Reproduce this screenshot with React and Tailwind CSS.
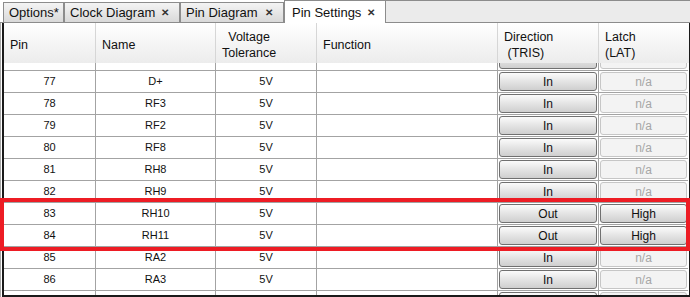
import React from "react";

const rows = [
    { pin: 76, name: "D-", dir: "In", lat: "n/a", hidden: true },
    { pin: 77, name: "D+", dir: "In", lat: "n/a" },
    { pin: 78, name: "RF3", dir: "In", lat: "n/a" },
    { pin: 79, name: "RF2", dir: "In", lat: "n/a" },
    { pin: 80, name: "RF8", dir: "In", lat: "n/a" },
    { pin: 81, name: "RH8", dir: "In", lat: "n/a" },
    { pin: 82, name: "RH9", dir: "In", lat: "n/a" },
    { pin: 83, name: "RH10", dir: "Out", lat: "High" },
    { pin: 84, name: "RH11", dir: "Out", lat: "High" },
    { pin: 85, name: "RA2", dir: "In", lat: "n/a" },
    { pin: 86, name: "RA3", dir: "In", lat: "n/a" },
    { pin: 87, name: "RA4", dir: "In", lat: "n/a", hidden: true },
];

const cols = "grid grid-cols-[92px_120px_101px_181px_101px_89px]";

const Tab = ({ label, width, close = true }) => (
    <div
        className={`${width} mt-[2px] h-[21px] flex items-center justify-between pl-[5px] pr-[10px] border border-[#8c8c8c] bg-gradient-to-b from-[#f4f4f4] to-[#d9d9d9] text-[13px] text-[#111]`}
    >
        <span>{label}</span>
        {close && <span className="text-[10px] font-bold text-[#333]">✕</span>}
    </div>
);

const Btn = ({ label, off }) => (
    <div
        className={
            off
                ? "w-full h-[19px] flex items-center justify-center rounded-[3px] border border-[#c6c6c6] bg-[#f3f3f3] text-[12px] text-[#a6a6a6]"
                : "w-full h-[19px] flex items-center justify-center rounded-[3px] border border-[#707070] bg-gradient-to-b from-[#fbfbfb] via-[#e4e4e4] to-[#cfcfcf] text-[12px] text-[#111]"
        }
    >
        {label}
    </div>
);

const HeadCell = ({ children, last }) => (
    <div
        className={`h-full flex items-center pl-[6px] pt-[4px] text-[12.5px] leading-[16px] text-[#111] ${
            last ? "" : "border-r border-[#d6d6d6]"
        }`}
    >
        {children}
    </div>
);

export default function App() {
    return (
        <div className="relative w-[690px] h-[297px] bg-white overflow-hidden font-['Liberation_Sans',Arial,sans-serif]">
            {/* Tab strip */}
            <div className="flex h-[23px] items-start">
                <div className="w-[3px] h-[23px] border-b border-[#8c8c8c]" />
                <Tab label="Options*" width="w-[61px]" close={false} />
                <Tab label="Clock Diagram" width="w-[116px]" />
                <Tab label="Pin Diagram" width="w-[104px]" />
                <div className="w-[102px] h-[23px] flex items-start justify-between pt-[2px] pl-[7px] pr-[10px] border-l border-r border-t border-[#8c8c8c] bg-white text-[13px] text-[#111]">
                    <span>Pin Settings</span>
                    <span className="text-[10px] font-bold text-[#333] pt-[2px]">✕</span>
                </div>
                <div className="flex-1 h-[23px] bg-[#ebebeb] border-t border-b border-[#8c8c8c]" />
            </div>

            {/* Table frame */}
            <div className="h-[274px] border-l border-[#a8a8a8] pl-[1px]">
                <div className="h-full border-l-2 border-r border-b-2 border-[#1a1a1a] overflow-hidden flex flex-col">
                    {/* Header */}
                    <div className={`${cols} h-[40px] shrink-0 bg-gradient-to-b from-white to-[#ececec] relative z-10`}>
                        <HeadCell>Pin</HeadCell>
                        <HeadCell>Name</HeadCell>
                        <HeadCell>
                            <span className="inline-block text-center">
                                Voltage
                                <br />
                                Tolerance
                            </span>
                        </HeadCell>
                        <HeadCell>Function</HeadCell>
                        <HeadCell>
                            <span className="whitespace-pre">{"Direction\n (TRIS)"}</span>
                        </HeadCell>
                        <HeadCell last>
                            <span>
                                Latch
                                <br />
                                (LAT)
                            </span>
                        </HeadCell>
                    </div>

                    {/* Body, scrolled so row 76 sits mostly under the header */}
                    <div className="flex-1 overflow-hidden">
                        <div className="-mt-[14px]">
                            {rows.map((r) => (
                                <div key={r.pin} className={`${cols} h-[22px] text-[11px] text-[#111]`}>
                                    <div className="flex items-center justify-center border-r border-b border-[#a3a3a3]">
                                        {!r.hidden && r.pin}
                                    </div>
                                    <div className="flex items-center justify-center border-r border-b border-[#a3a3a3]">
                                        {!r.hidden && r.name}
                                    </div>
                                    <div className="flex items-center justify-center border-r border-b border-[#a3a3a3]">
                                        {!r.hidden && "5V"}
                                    </div>
                                    <div className="border-r border-b border-[#a3a3a3]" />
                                    <div className="flex items-center px-[1px] border-r border-b border-[#a3a3a3]">
                                        <Btn label={r.hidden ? "" : r.dir} />
                                    </div>
                                    <div className="flex items-center pl-[1px] pr-[1px] border-b border-[#a3a3a3]">
                                        <Btn label={r.hidden ? "" : r.lat} off={r.lat === "n/a"} />
                                    </div>
                                </div>
                            ))}
                        </div>
                    </div>
                </div>
            </div>

            {/* Highlight annotation */}
            <div className="absolute left-0 top-[198px] w-[690px] h-[53px] border-4 border-[#ed1c24] pointer-events-none" />
        </div>
    );
}
